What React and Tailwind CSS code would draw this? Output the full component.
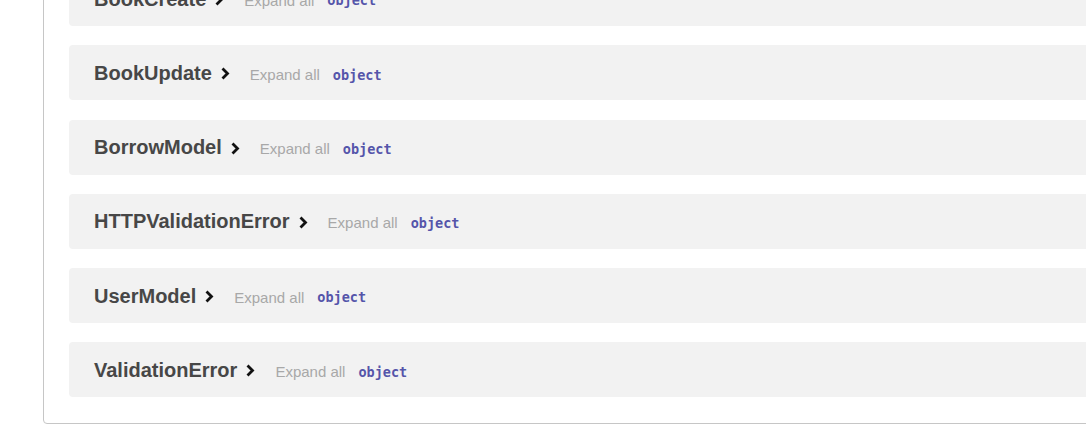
const models = [
  "BookCreate",
  "BookUpdate",
  "BorrowModel",
  "HTTPValidationError",
  "UserModel",
  "ValidationError",
];

function Chevron() {
  return (
    <svg width="11" height="15" viewBox="0 0 11 15" className="shrink-0">
      <polyline
        points="2.5,2.5 7.5,7.5 2.5,12.5"
        fill="none"
        stroke="#111"
        strokeWidth="2.8"
        strokeLinecap="butt"
        strokeLinejoin="miter"
      />
    </svg>
  );
}

function ModelRow({ name }) {
  return (
    <div className="h-[55px] rounded-[4px] bg-[#f2f2f2] flex items-center pl-[25px]">
      <span className="text-[20px] font-bold text-[#474747] leading-none">{name}</span>
      <span className="ml-[8px] mt-[2px] flex items-center">
        <Chevron />
      </span>
      <span className="ml-[19px] mt-[3px] text-[15px] text-[#a8a8a8] leading-none">Expand all</span>
      <span
        className="ml-[13px] mt-[5px] text-[13.5px] font-bold text-[#55a] leading-none"
        style={{ fontFamily: '"DejaVu Sans Mono", "Liberation Mono", monospace' }}
      >
        object
      </span>
    </div>
  );
}

export default function App() {
  return (
    <div
      className="w-[1086px] h-[429px] overflow-hidden bg-white"
      style={{ fontFamily: '"Liberation Sans", Arial, sans-serif' }}
    >
      <div className="ml-[43px] -mt-[60px] w-[1100px] border border-[#c6c6c6] rounded-[4px] pt-[30px] pb-[26px] pl-[25px]">
        <div className="flex flex-col gap-[19.25px]">
          {models.map((m) => (
            <ModelRow key={m} name={m} />
          ))}
        </div>
      </div>
    </div>
  );
}
